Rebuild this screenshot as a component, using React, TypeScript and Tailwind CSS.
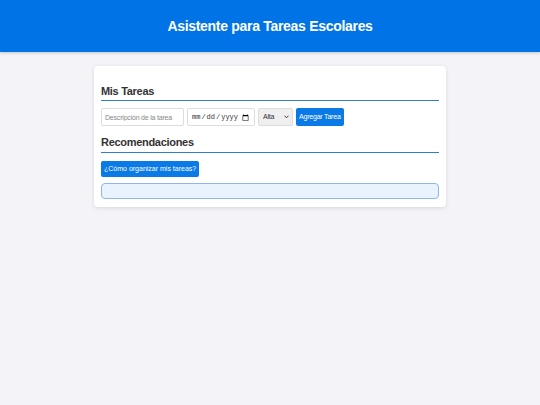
import React from "react";

const App = () => {
  return (
    <div className="min-h-screen bg-[#f4f4f8] font-['Liberation_Sans',Arial,sans-serif] text-[#333]">
      <header className="h-[52px] bg-[#0073e6] flex items-center justify-center shadow-[0_1px_3px_rgba(0,0,0,0.2)]">
        <h1 className="text-white text-[14px] font-bold tracking-[-0.3px]">Asistente para Tareas Escolares</h1>
      </header>
      <main className="w-[352px] mx-auto mt-[14px] bg-white rounded-[4px] shadow-[0_1px_4px_rgba(0,0,0,0.12)] px-[7px] pt-[18px] pb-[8px]">
        <h2 className="text-[11px] font-bold leading-[14px] tracking-[-0.3px] pb-[2px] border-b border-[#2f7fd0]">Mis Tareas</h2>
        <div className="flex items-center gap-[3px] mt-[7px] tracking-[-0.2px]">
          <input
            type="text"
            placeholder="Descripción de la tarea"
            className="w-[83px] h-[18px] border border-[#ddd] rounded-[2px] px-[3px] text-[7px] placeholder:text-[#888]"
          />
          <input
            type="date"
            className="w-[68px] h-[18px] border border-[#ddd] rounded-[2px] px-[3px] text-[7px] font-['Liberation_Mono',monospace] tracking-normal"
          />
          <div className="relative flex">
            <select className="appearance-none block w-[35px] h-[18px] border border-[#ddd] rounded-[2px] bg-[#efefef] pl-[4px] text-[7px]">
              <option>Alta</option>
              <option>Media</option>
              <option>Baja</option>
            </select>
            <svg className="absolute right-[4px] top-[7px] pointer-events-none" width="5" height="4" viewBox="0 0 10 8">
              <path d="M1 1.5 L5 5.5 L9 1.5" fill="none" stroke="#333" strokeWidth="2" />
            </svg>
          </div>
          <button className="h-[18px] px-[3px] rounded-[2px] bg-[#0a7ae6] text-white text-[7px]">
            Agregar Tarea
          </button>
        </div>
        <h2 className="text-[11px] font-bold leading-[14px] tracking-[-0.3px] pb-[3px] mt-[9px] border-b border-[#2f7fd0]">Recomendaciones</h2>
        <button className="block mt-[8px] h-[16px] px-[3px] rounded-[2px] bg-[#0a7ae6] text-white text-[7px]">
          ¿Cómo organizar mis tareas?
        </button>
        <div className="mt-[6px] h-[16px] rounded-[4px] border border-[#8fb8e0] bg-[#e8f3fd]" />
      </main>
    </div>
  );
};

export default App;
